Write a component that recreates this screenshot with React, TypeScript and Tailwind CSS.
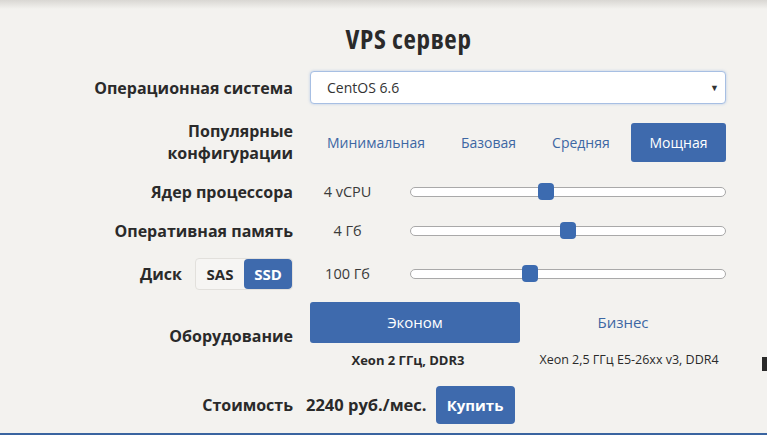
import React from "react";

const font = { fontFamily: '"Open Sans", "Noto Sans", sans-serif' };

function Slider({ pos }: { pos: number }) {
  return (
    <div className="relative h-[10px] w-[316px] rounded-full border border-[#a9a9a9] bg-white">
      <div
        className="absolute top-[-5px] h-[17px] w-[16px] -translate-x-1/2 rounded-[4px] bg-[#3c6bb0]"
        style={{ left: pos }}
      />
    </div>
  );
}

function Label({ children }: { children: React.ReactNode }) {
  return (
    <div className="w-[293px] shrink-0 text-right text-[16px] font-bold leading-[22px] text-[#2a2a2a]">
      {children}
    </div>
  );
}

export default function App() {
  return (
    <div className="relative h-[435px] w-[767px] overflow-hidden bg-[#f3f2ef]" style={font}>
      <div className="absolute left-0 right-0 top-0 h-[9px] bg-gradient-to-b from-[#d9d7d3] to-[#f3f2ef]" />
      <div className="absolute bottom-0 left-0 right-0 h-[2px] bg-[#3a64a0]" />
      <div className="absolute right-0 top-[357px] h-[14px] w-[5px] bg-[#2a2a2a]" />

      <div className="relative flex flex-col pt-[22px]">
        <h1 className="ml-[310px] w-[197px] text-center text-[27px] font-bold leading-[34px] tracking-[0.7px] text-[#2a2a2a] font-stretch-condensed">
          VPS сервер
        </h1>

        <div className="mt-[15px] flex items-center">
          <Label>Операционная система</Label>
          <div className="ml-[17px] flex h-[33px] w-[416px] items-center justify-between rounded-[4px] border border-[#a7bfe3] bg-white pl-[16px] pr-[6px] text-[14px] text-[#333] shadow-[0_0_3px_rgba(100,150,220,0.4)]">
            <span>CentOS 6.6</span>
            <span className="text-[9px] text-[#333]">▼</span>
          </div>
        </div>

        <div className="mt-[16px] flex items-center">
          <Label>
            Популярные
            <br />
            конфигурации
          </Label>
          <div className="ml-[17px] flex h-[39px] w-[416px] items-center text-[14px] text-[#3d67a3]">
            <span className="ml-[17px]">Минимальная</span>
            <span className="ml-[36px]">Базовая</span>
            <span className="ml-[36px]">Средняя</span>
            <span className="ml-auto flex h-[39px] w-[95px] items-center justify-center rounded-[3px] bg-[#3e6aad] text-white">
              Мощная
            </span>
          </div>
        </div>

        <div className="mt-[17px] flex h-[22px] items-center">
          <Label>Ядер процессора</Label>
          <div className="ml-[17px] w-[75px] text-center text-[14.5px] text-[#3a3a3a]">4 vCPU</div>
          <div className="ml-[25px]">
            <Slider pos={135} />
          </div>
        </div>

        <div className="mt-[17px] flex h-[22px] items-center">
          <Label>Оперативная память</Label>
          <div className="ml-[17px] w-[75px] text-center text-[14.5px] text-[#3a3a3a]">4 Гб</div>
          <div className="ml-[25px]">
            <Slider pos={157} />
          </div>
        </div>

        <div className="mt-[16px] flex h-[32px] items-center">
          <div className="flex w-[293px] shrink-0 items-center justify-end">
            <span className="text-[16px] font-bold text-[#2a2a2a]">Диск</span>
            <div className="ml-[13px] flex h-[32px] w-[98px] overflow-hidden rounded-[4px] border border-[#e2e0dc] bg-[#f6f5f3] text-[15px] font-bold">
              <span className="flex w-[49px] items-center justify-center text-[#2a2a2a]">SAS</span>
              <span className="flex w-[49px] items-center justify-center rounded-[4px] bg-[#3e6aad] text-white">SSD</span>
            </div>
          </div>
          <div className="ml-[17px] w-[75px] text-center text-[14.5px] text-[#3a3a3a]">100 Гб</div>
          <div className="ml-[25px]">
            <Slider pos={119} />
          </div>
        </div>

        <div className="mt-[12px] flex items-start">
          <div className="flex h-[68px] w-[293px] shrink-0 items-center justify-end text-[16px] font-bold text-[#2a2a2a]">
            Оборудование
          </div>
          <div className="ml-[17px] flex w-[416px] flex-col">
            <div className="flex">
              <div className="flex h-[41px] w-[210px] items-center justify-center rounded-[3px] bg-[#3e6aad] text-[15px] text-white">
                Эконом
              </div>
              <div className="flex h-[41px] w-[206px] items-center justify-center text-[15px] text-[#3d67a3]">
                Бизнес
              </div>
            </div>
            <div className="mt-[9px] flex text-[12.5px] leading-[16px] text-[#2a2a2a]">
              <div className="w-[196px] shrink-0 text-center text-[13px] font-bold">Xeon 2 ГГц, DDR3</div>
              <div className="ml-[4px] w-[238px] shrink-0 text-center">Xeon 2,5 ГГц E5-26xx v3, DDR4</div>
            </div>
          </div>
        </div>

        <div className="mt-[16px] flex items-center">
          <Label>Стоимость</Label>
          <span className="ml-[13px] text-[16.5px] font-bold text-[#2a2a2a]">2240 руб./мес.</span>
          <span className="ml-[9px] flex h-[38px] w-[79px] items-center justify-center rounded-[4px] bg-[#3e6aad] text-[15px] font-bold text-white">
            Купить
          </span>
        </div>
      </div>
    </div>
  );
}
